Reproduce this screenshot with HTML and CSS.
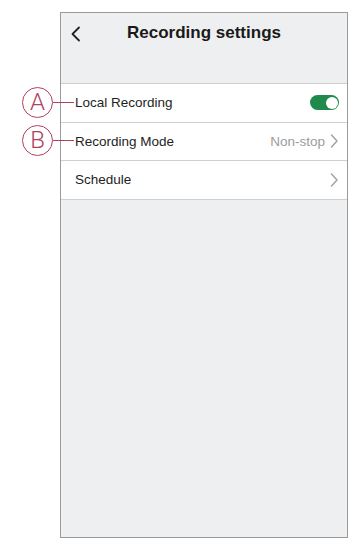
FILE: index.html
```html
<!DOCTYPE html>
<html>
<head>
<meta charset="utf-8">
<link rel="stylesheet" href="styles.css">
</head>
<body>
<div class="page">
  <div class="phone">
    <div class="header">
      <svg class="back" width="12" height="16" viewBox="0 0 12 16"><path d="M9 1.5 L2.5 8 L9 14.5" fill="none" stroke="#222" stroke-width="1.8" stroke-linecap="round" stroke-linejoin="round"/></svg>
      <div class="title">Recording settings</div>
    </div>
    <div class="list">
      <div class="row">
        <span class="label">Local Recording</span>
        <span class="toggle"><span class="knob"></span></span>
      </div>
      <div class="row">
        <span class="label">Recording Mode</span>
        <span class="right"><span class="value">Non-stop</span>
          <svg class="chev" width="9" height="14" viewBox="0 0 9 14"><path d="M1.5 1 L7 7 L1.5 13" fill="none" stroke="#a0a0a0" stroke-width="1.4" stroke-linecap="round" stroke-linejoin="round"/></svg>
        </span>
      </div>
      <div class="row">
        <span class="label">Schedule</span>
        <svg class="chev" width="9" height="14" viewBox="0 0 9 14"><path d="M1.5 1 L7 7 L1.5 13" fill="none" stroke="#a0a0a0" stroke-width="1.4" stroke-linecap="round" stroke-linejoin="round"/></svg>
      </div>
    </div>
  </div>
  <div class="callout callout-a"><span class="circle">A</span><span class="line"></span></div>
  <div class="callout callout-b"><span class="circle">B</span><span class="line"></span></div>
</div>
</body>
</html>
```
FILE: styles.css
```css
html, body {
  margin: 0;
  padding: 0;
  background: #ffffff;
}
body {
  font-family: "Liberation Sans", Arial, sans-serif;
  color: #1e1e1e;
}
.page {
  position: relative;
  width: 362px;
  height: 550px;
  padding: 12px 0 0 60px;
  box-sizing: border-box;
}
.phone {
  width: 288px;
  height: 526px;
  box-sizing: border-box;
  border: 1.5px solid #9a9a9a;
  background: #eeeff0;
  display: flex;
  flex-direction: column;
}
.header {
  height: 70px;
  position: relative;
  display: flex;
  justify-content: center;
  padding-top: 9px;
  box-sizing: border-box;
}
.back {
  position: absolute;
  left: 9px;
  top: 13px;
}
.title {
  font-weight: bold;
  font-size: 17px;
  line-height: 22px;
  color: #1a1a1a;
}
.list {
  background: #ffffff;
  border-top: 1px solid #cfcfcf;
}
.row {
  height: 37.5px;
  border-bottom: 1.5px solid #cfcfcf;
  display: flex;
  align-items: center;
  justify-content: space-between;
  padding: 0 8px 0 14px;
  font-size: 13.5px;
}
.label {
  color: #1e1e1e;
}
.right {
  display: flex;
  align-items: center;
  gap: 5px;
}
.value {
  color: #9c9c9c;
}
.chev {
  display: block;
}
.toggle {
  width: 29px;
  height: 15px;
  border-radius: 8px;
  background: #1f8a4c;
  position: relative;
}
.knob {
  position: absolute;
  right: 1.5px;
  top: 1.5px;
  width: 12px;
  height: 12px;
  border-radius: 50%;
  background: #ffffff;
}
.callout {
  position: absolute;
  left: 22px;
  display: flex;
  align-items: center;
}
.callout-a { top: 87px; }
.callout-b { top: 125px; }
.circle {
  width: 31px;
  height: 31px;
  box-sizing: border-box;
  border: 1.5px solid #b2405f;
  border-radius: 50%;
  color: #b2405f;
  font-family: Roboto, "Liberation Sans", sans-serif;
  font-weight: 300;
  font-size: 24px;
  line-height: 28px;
  text-align: center;
  background: #ffffff;
}
.line {
  width: 21px;
  height: 1.2px;
  background: #b2405f;
}
```
